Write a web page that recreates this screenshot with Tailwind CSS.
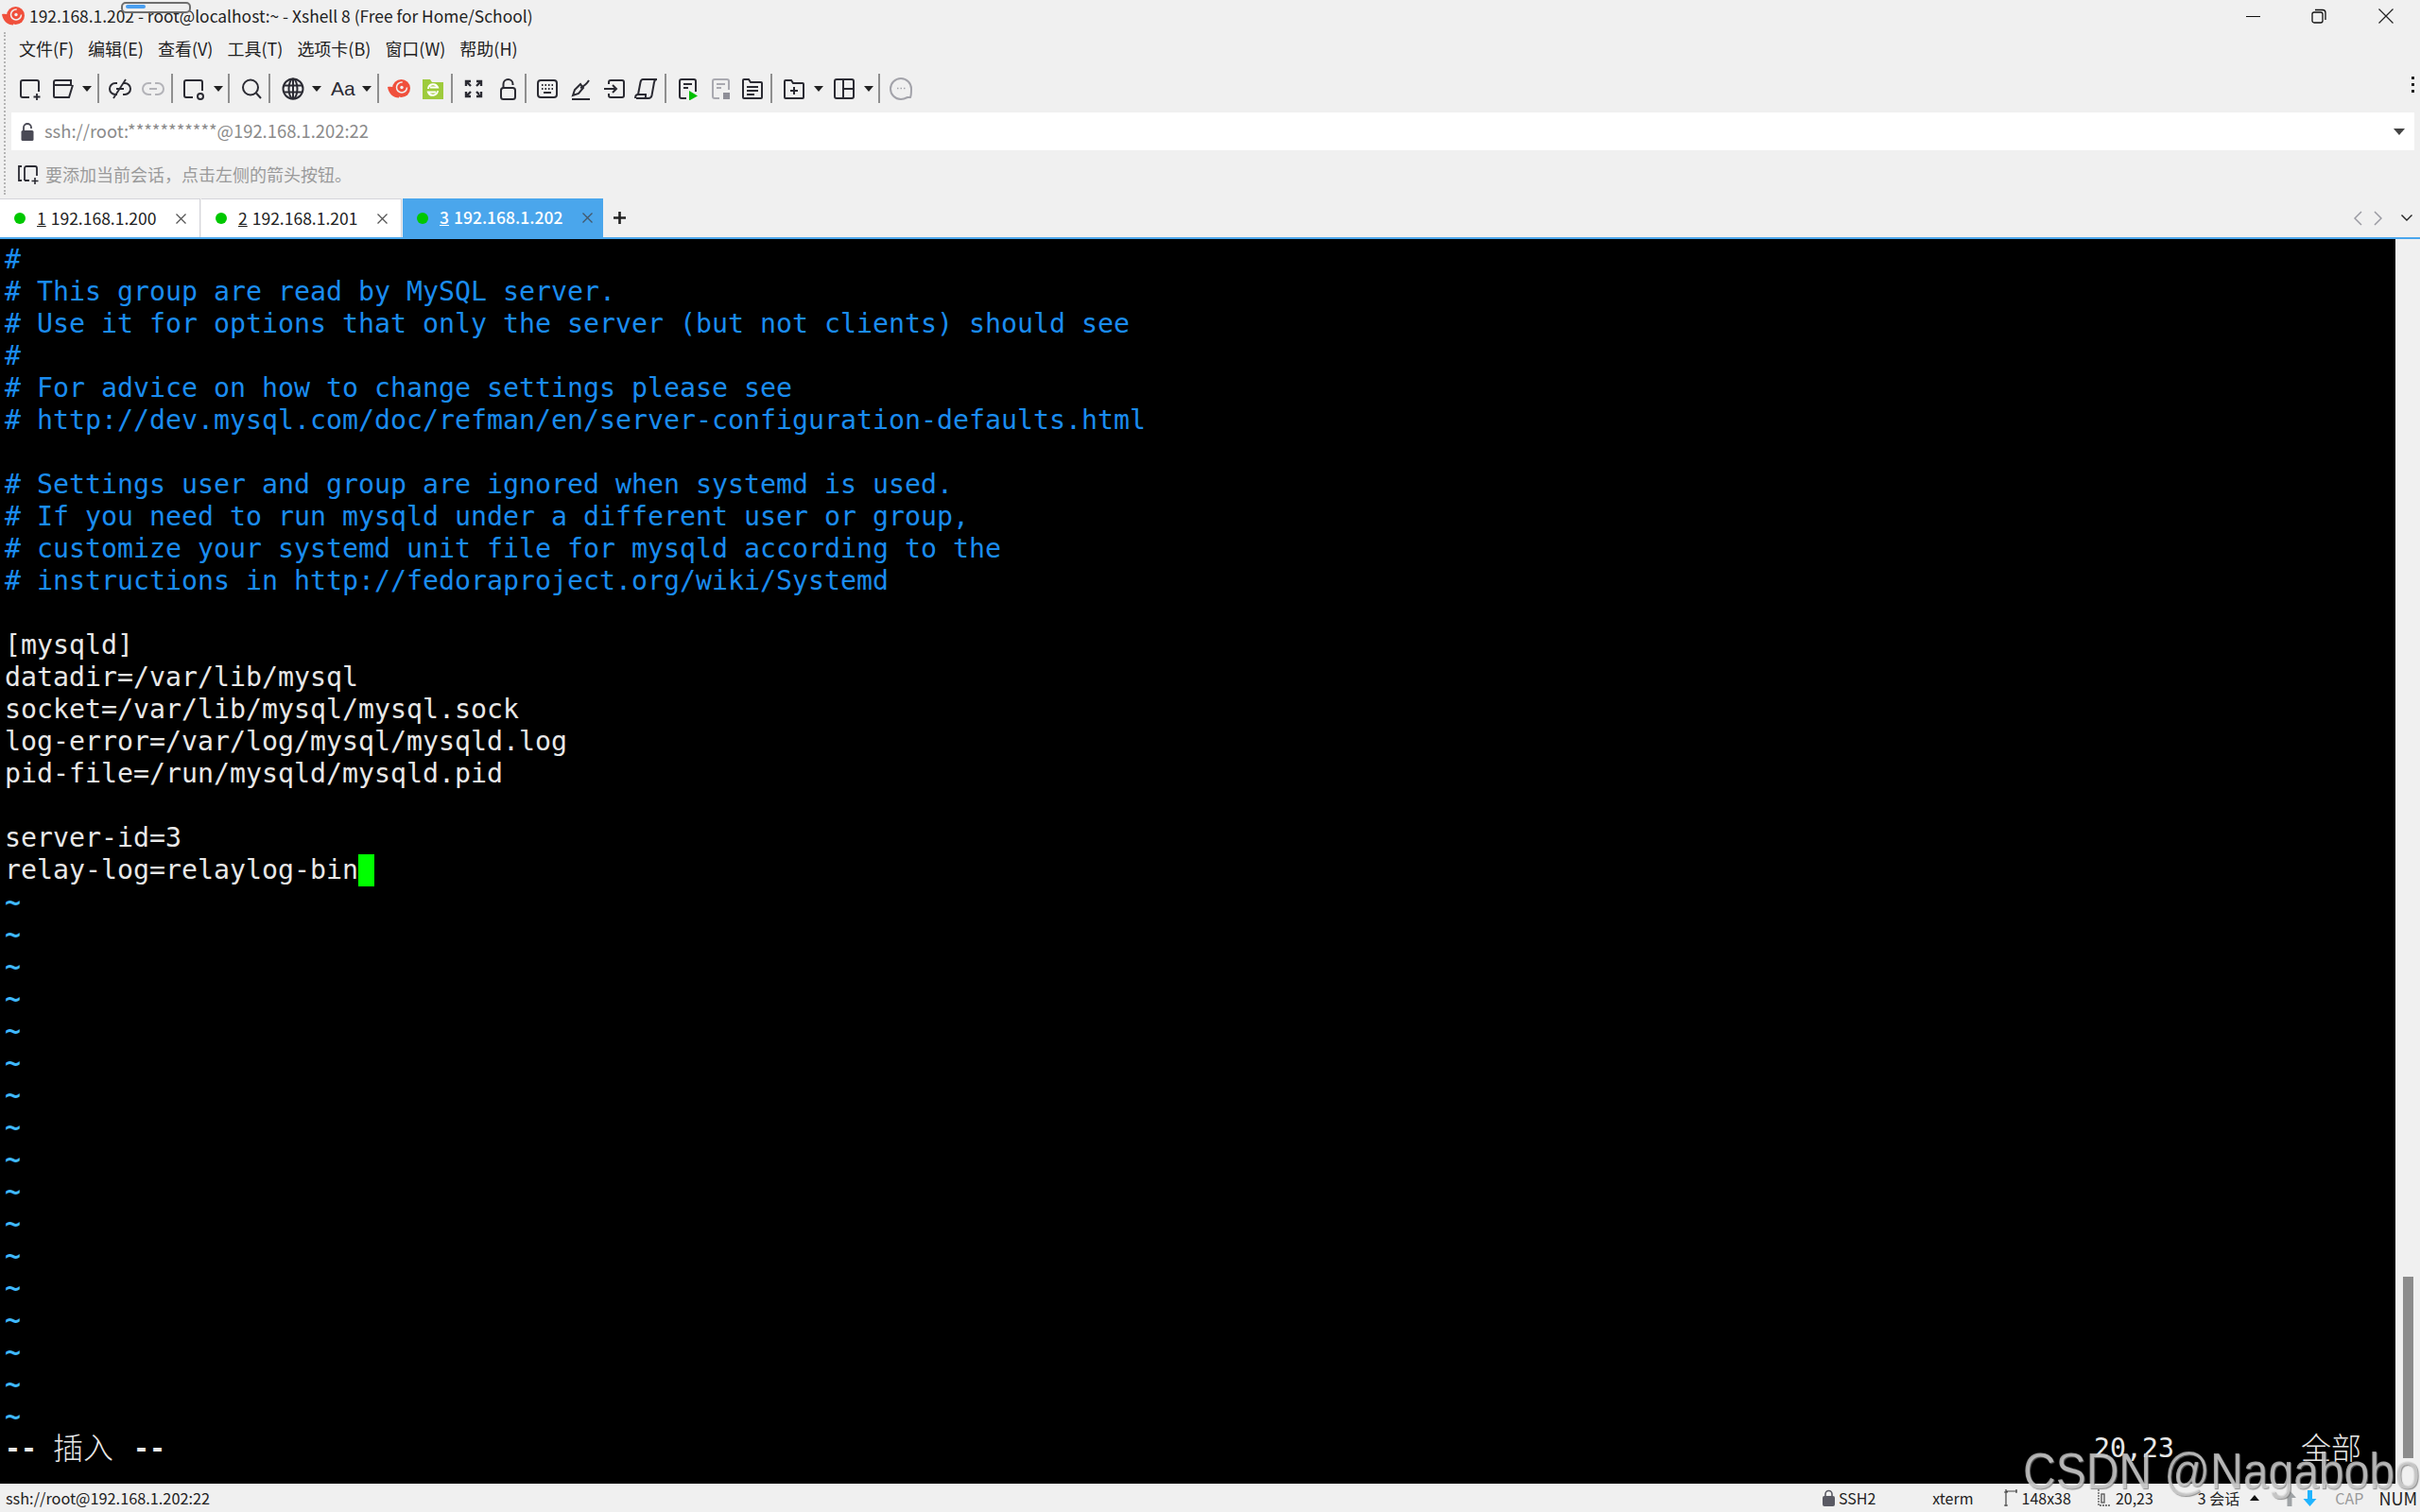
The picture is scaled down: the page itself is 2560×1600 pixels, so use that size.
<!DOCTYPE html>
<html lang="zh-CN">

<head>
    <meta charset="UTF-8">
    <title>192.168.1.202 - root@localhost:~ - Xshell 8 (Free for Home/School)</title>
    <script src="https://cdn.jsdelivr.net/npm/@tailwindcss/browser@4"></script>
</head>

<body class="w-[2560px] h-[1600px] overflow-hidden bg-[#f0f0f0] font-['Noto_Sans_CJK_SC',sans-serif] text-[#222]">
    <div class="relative w-[2560px] h-[1600px] flex flex-col">

        <!-- title bar -->
        <div class="h-[34px] flex items-center shrink-0">
            <svg class="ml-[2px] w-[24px] h-[20px]" viewBox="0 0 24 20">
                <circle cx="14.500" cy="9.500" r="9.500" fill="#f0503c"/>
                <path d="M0 8c5-.500 9 .500 12 2v9.500C6 19.500 1 15 0 8z" fill="#f0503c"/>
                <circle cx="15" cy="8.500" r="5.500" fill="none" stroke="#f0f0f0" stroke-width="1.500" stroke-dasharray="26 9"/>
                <circle cx="15" cy="8.500" r="1.700" fill="#f0f0f0"/>
            </svg>
            <span class="ml-[5px] text-[17.4px] leading-[34px] text-[#222]">192.168.1.202 - root@localhost:~ - Xshell 8 (Free for Home/School)</span>
            <div class="ml-auto flex items-center h-[34px]">
                <div class="w-[15px] h-[1px] bg-[#111] mr-[54px]"></div>
                <svg class="w-[16px] h-[16px] mr-[55px]" viewBox="0 0 16 16" fill="none" stroke="#111" stroke-width="1.300">
                    <rect x="1" y="4" width="11" height="11" rx="2"/>
                    <path d="M4 1.500h8a3 3 0 0 1 3 3V12"/>
                </svg>
                <svg class="w-[16px] h-[16px] mr-[28px]" viewBox="0 0 16 16" fill="none" stroke="#222" stroke-width="1.200">
                    <path d="M.5.500l15 15M15.500.500l-15 15"/>
                </svg>
            </div>
        </div>

        <!-- menu bar -->
        <div class="h-[34px] flex items-center pl-[20px] gap-[15px] text-[18px] text-[#222] shrink-0">
            <span>文件(F)</span>
            <span>编辑(E)</span>
            <span>查看(V)</span>
            <span>工具(T)</span>
            <span>选项卡(B)</span>
            <span>窗口(W)</span>
            <span>帮助(H)</span>
        </div>

        <!-- toolbar -->
        <div class="h-[51px] flex items-center pl-[20px] shrink-0 relative">
            <svg class="w-[24px] h-[24px]" viewBox="0 0 24 24" fill="none" stroke="#2b2b33" stroke-width="2"><path d="M11 21H4a2 2 0 0 1-2-2V5a2 2 0 0 1 2-2h15a2 2 0 0 1 2 2v10"/><path d="M19 17v7M15.500 20.500h7" stroke-width="1.800"/></svg>
            <svg class="ml-[11px] w-[24px] h-[24px]" viewBox="0 0 24 24" fill="none" stroke="#2b2b33" stroke-width="2"><path d="M2 20V5a2 2 0 0 1 2-2h16v5H2"/><path d="M2 20a1 1 0 0 0 1 1h15l4-13"/></svg>
            <div class="ml-[8px] w-0 h-0 border-x-[5px] border-x-transparent border-t-[6px] border-t-[#222]"></div>
            <div class="ml-[6px] w-[2px] h-[31px] bg-[#8f8f8f]"></div>
            <svg class="ml-[10px] w-[24px] h-[24px]" viewBox="0 0 24 24" fill="none" stroke="#2b2b33" stroke-width="2"><path d="M9 6H7a6 6 0 0 0 0 12h2M15 6h2a6 6 0 0 1 0 12h-2M8 12h8"/><path d="M18 2L5 22" stroke-width="1.800"/></svg>
            <svg class="ml-[11px] w-[24px] h-[24px]" viewBox="0 0 24 24" fill="none" stroke="#b3b3b8" stroke-width="2"><path d="M10 6H7a6 6 0 0 0 0 12h3M14 6h3a6 6 0 0 1 0 12h-3M8 12h8"/></svg>
            <div class="ml-[7px] w-[2px] h-[31px] bg-[#8f8f8f]"></div>
            <svg class="ml-[10px] w-[24px] h-[24px]" viewBox="0 0 24 24" fill="none" stroke="#2b2b33" stroke-width="2"><path d="M11 21H4a2 2 0 0 1-2-2V5a2 2 0 0 1 2-2h15a2 2 0 0 1 2 2v9"/><circle cx="19" cy="20" r="3"/></svg>
            <div class="ml-[9px] w-0 h-0 border-x-[5px] border-x-transparent border-t-[6px] border-t-[#222]"></div>
            <div class="ml-[5px] w-[2px] h-[31px] bg-[#8f8f8f]"></div>
            <svg class="ml-[11px] w-[24px] h-[24px]" viewBox="0 0 24 24" fill="none" stroke="#2b2b33" stroke-width="2"><circle cx="11" cy="10.500" r="8"/><path d="M17 16.500l5 5.500"/></svg>
            <div class="ml-[6px] w-[2px] h-[31px] bg-[#8f8f8f]"></div>
            <svg class="ml-[12px] w-[24px] h-[24px]" viewBox="0 0 24 24" fill="none" stroke="#2b2b33" stroke-width="2"><circle cx="12" cy="12" r="10.500"/><ellipse cx="12" cy="12" rx="4.500" ry="10.500"/><path d="M12 1.500v21M2 8.500h20M2 15.500h20"/></svg>
            <div class="ml-[8px] w-0 h-0 border-x-[5px] border-x-transparent border-t-[6px] border-t-[#222]"></div>
            <span class="ml-[10px] w-[24px] text-[21px] leading-[24px] text-center text-[#2b2b33] font-['Liberation_Sans',sans-serif]">Aa</span>
            <div class="ml-[9px] w-0 h-0 border-x-[5px] border-x-transparent border-t-[6px] border-t-[#222]"></div>
            <div class="ml-[6px] w-[2px] h-[31px] bg-[#8f8f8f]"></div>
            <svg class="ml-[9px] w-[24px] h-[20px]" viewBox="0 0 24 20">
                <circle cx="14.500" cy="9.500" r="9.500" fill="#f0503c"/>
                <path d="M0 8c5-.500 9 .500 12 2v9.500C6 19.500 1 15 0 8z" fill="#f0503c"/>
                <circle cx="15" cy="8.500" r="5.500" fill="none" stroke="#f0f0f0" stroke-width="1.500" stroke-dasharray="26 9"/>
                <circle cx="15" cy="8.500" r="1.700" fill="#f0f0f0"/>
            </svg>
            <svg class="ml-[12px] w-[24px] h-[24px]" viewBox="0 0 24 24">
                <path d="M1 2h8l2 3h12v18H1z" fill="#9ecb3c"/>
                <path d="M7 12a5.200 5.200 0 0 1 10-1.500H9M17 14a5.200 5.200 0 0 1-10 1.500h8" fill="none" stroke="#fff" stroke-width="2"/>
            </svg>
            <div class="ml-[7px] w-[2px] h-[31px] bg-[#8f8f8f]"></div>
            <svg class="ml-[10px] w-[24px] h-[24px]" viewBox="0 0 24 24" fill="none" stroke="#2b2b33" stroke-width="2.400"><path d="M4 9V4h5M4 4l5 5M20 9V4h-5M20 4l-5 5M4 15v5h5M4 20l5-5M20 15v5h-5M20 20l-5-5"/></svg>
            <svg class="ml-[12px] w-[24px] h-[24px]" viewBox="0 0 24 24" fill="none" stroke="#2b2b33" stroke-width="2"><rect x="5" y="11" width="15" height="12" rx="2.500"/><path d="M7.500 11V7a5 5 0 0 1 10 0v1"/></svg>
            <div class="ml-[6px] w-[2px] h-[31px] bg-[#8f8f8f]"></div>
            <svg class="ml-[10px] w-[24px] h-[24px]" viewBox="0 0 24 24" fill="none" stroke="#2b2b33" stroke-width="2"><rect x="2" y="3" width="20" height="18" rx="3"/><path d="M6 8h1.500M9.500 8H11M13 8h1.500M16.500 8H18M6 12h1.500M9.500 12H11M13 12h1.500M16.500 12H18M8 16h8"/></svg>
            <svg class="ml-[11px] w-[24px] h-[24px]" viewBox="0 0 24 24" fill="none" stroke="#2b2b33" stroke-width="2"><path d="M3 23h19"/><path d="M4 19l2-6 6-6 3 4-5 6z"/><path d="M12 11c2-1 6-3 9-8"/></svg>
            <svg class="ml-[12px] w-[24px] h-[24px]" viewBox="0 0 24 24" fill="none" stroke="#2b2b33" stroke-width="2"><path d="M6 7V5a2 2 0 0 1 2-2h12a2 2 0 0 1 2 2v14a2 2 0 0 1-2 2H8a2 2 0 0 1-2-2v-2"/><path d="M1 12h13M10 8l4 4-4 4"/></svg>
            <svg class="ml-[9px] w-[24px] h-[24px]" viewBox="0 0 24 24" fill="none" stroke="#2b2b33" stroke-width="2"><path d="M2 22h13c2 0 3-1 3.500-3L21 5c.300-2 1-3 3-3H9C7.500 2 7 3 6.500 5L4 18"/><path d="M1 22c0-2 1-4 3-4h8v2c0 1-.500 2-1.500 2"/></svg>
            <div class="ml-[8px] w-[2px] h-[31px] bg-[#8f8f8f]"></div>
            <svg class="ml-[10px] w-[24px] h-[24px]" viewBox="0 0 24 24" fill="none" stroke="#2b2b33" stroke-width="2"><path d="M11 22H6a2 2 0 0 1-2-2V4a2 2 0 0 1 2-2h13a2 2 0 0 1 2 2v11"/><path d="M8 7h9M8 11h5"/><path d="M14 14l9 5.500-9 5z" fill="#00c000" stroke="none"/></svg>
            <svg class="ml-[11px] w-[24px] h-[24px]" viewBox="0 0 24 24" fill="none" stroke="#a9a9b0" stroke-width="2"><path d="M11 22H6a2 2 0 0 1-2-2V4a2 2 0 0 1 2-2h13a2 2 0 0 1 2 2v9"/><path d="M8 7h9M8 11h5"/><rect x="15" y="16" width="7" height="7" fill="#8f8f98" stroke="none"/></svg>
            <svg class="ml-[10px] w-[24px] h-[24px]" viewBox="0 0 24 24" fill="none" stroke="#2b2b33" stroke-width="2"><path d="M2 4v17a1 1 0 0 0 1 1h18a1 1 0 0 0 1-1V6a1 1 0 0 0-1-1H10L8 2H3a1 1 0 0 0-1 1z"/><path d="M6 10h12M6 14h12M6 18h8"/></svg>
            <div class="ml-[7px] w-[2px] h-[31px] bg-[#8f8f8f]"></div>
            <svg class="ml-[11px] w-[24px] h-[24px]" viewBox="0 0 24 24" fill="none" stroke="#2b2b33" stroke-width="2"><path d="M2 4v17a1 1 0 0 0 1 1h18a1 1 0 0 0 1-1V7a1 1 0 0 0-1-1H11L9 3H3a1 1 0 0 0-1 1z"/><path d="M12 10v8M8 14h8"/></svg>
            <div class="ml-[9px] w-0 h-0 border-x-[5px] border-x-transparent border-t-[6px] border-t-[#222]"></div>
            <svg class="ml-[10px] w-[24px] h-[24px]" viewBox="0 0 24 24" fill="none" stroke="#2b2b33" stroke-width="2"><rect x="2" y="2" width="20" height="20" rx="2"/><path d="M11 2v20M11 12h11"/></svg>
            <div class="ml-[9px] w-0 h-0 border-x-[5px] border-x-transparent border-t-[6px] border-t-[#222]"></div>
            <div class="ml-[5px] w-[2px] h-[31px] bg-[#8f8f8f]"></div>
            <svg class="ml-[10px] w-[24px] h-[26px]" viewBox="0 0 24 26" fill="none" stroke="#a3a3aa" stroke-width="2"><path d="M22 22c1-2 1-6 1-9a11 11 0 1 0-11 11c3 0 5-1 7-2z"/><path d="M8 12.500h1.500M11.500 12.500H13M15 12.500h1.500" stroke-width="1.500"/></svg>
            <div class="absolute right-[6px] top-[13px] flex flex-col gap-[4px]">
                <div class="w-[3px] h-[3px] bg-[#222]"></div>
                <div class="w-[3px] h-[3px] bg-[#222]"></div>
                <div class="w-[3px] h-[3px] bg-[#222]"></div>
            </div>
        </div>

        <!-- address bar -->
        <div class="h-[40px] ml-[12px] mr-[6px] bg-white flex items-center shrink-0">
            <svg class="ml-[10px] w-[14px] h-[19px]" viewBox="0 0 14 19"><path d="M3 8V5a4 4 0 0 1 8 0v1" fill="none" stroke="#4a4a55" stroke-width="1.800"/><rect x="0.500" y="8" width="13" height="11" rx="1.500" fill="#4a4a55"/></svg>
            <span class="ml-[11px] text-[18.4px] text-[#8b8b8b]">ssh://root:***********@192.168.1.202:22</span>
            <div class="ml-auto mr-[10px] w-0 h-0 border-x-[6px] border-x-transparent border-t-[7px] border-t-[#444]"></div>
        </div>

        <!-- hint bar -->
        <div class="h-[51px] flex items-center pl-[19px] shrink-0">
            <svg class="w-[22px] h-[20px]" viewBox="0 0 22 20" fill="none" stroke="#2b2b33" stroke-width="1.800"><path d="M4 1H1v15h3"/><path d="M7 16V3a2 2 0 0 1 2-2h9a2 2 0 0 1 2 2v8M7 16h5"/><path d="M18 13v7M14.500 16.500h7" stroke-width="1.600"/></svg>
            <span class="ml-[7px] text-[18px] text-[#9a9a9a]">要添加当前会话，点击左侧的箭头按钮。</span>
        </div>

        <!-- tabs -->
        <div class="h-[43px] flex items-stretch border-b-[2px] border-b-[#4aa6ec] shrink-0 text-[17.5px]">
            <div class="w-[212px] bg-white border-t-[1px] border-r-[1px] border-[#d4d4da] flex items-center pl-[15px]">
                <div class="w-[12px] h-[12px] rounded-full bg-[#00c800]"></div>
                <span class="ml-[12px] underline">1</span>
                <span class="ml-[5px]">192.168.1.200</span>
                <svg class="ml-[21px] w-[11px] h-[11px]" viewBox="0 0 11 11" fill="none" stroke="#555" stroke-width="1.300"><path d="M.5.500l10 10M10.500.500l-10 10"/></svg>
            </div>
            <div class="ml-[1px] w-[212px] bg-white border-t-[1px] border-r-[1px] border-[#d4d4da] flex items-center pl-[15px]">
                <div class="w-[12px] h-[12px] rounded-full bg-[#00c800]"></div>
                <span class="ml-[12px] underline">2</span>
                <span class="ml-[5px]">192.168.1.201</span>
                <svg class="ml-[21px] w-[11px] h-[11px]" viewBox="0 0 11 11" fill="none" stroke="#555" stroke-width="1.300"><path d="M.5.500l10 10M10.500.500l-10 10"/></svg>
            </div>
            <div class="ml-[1px] w-[212px] bg-[#4aa6ec] flex items-center pl-[15px] text-white font-medium">
                <div class="w-[12px] h-[12px] rounded-full bg-[#00c800]"></div>
                <span class="ml-[12px] underline">3</span>
                <span class="ml-[5px]">192.168.1.202</span>
                <svg class="ml-[21px] w-[11px] h-[11px]" viewBox="0 0 11 11" fill="none" stroke="#44586a" stroke-width="1.300"><path d="M.5.500l10 10M10.500.500l-10 10"/></svg>
            </div>
            <svg class="ml-[11px] self-center w-[13px] h-[13px]" viewBox="0 0 13 13" fill="none" stroke="#222" stroke-width="2.600"><path d="M6.500 0v13M0 6.500h13"/></svg>
            <div class="ml-auto flex items-center">
                <svg class="w-[9px] h-[16px] mr-[12px]" viewBox="0 0 9 16" fill="none" stroke="#9a9aa2" stroke-width="1.500"><path d="M8 1L1 8l7 7"/></svg>
                <svg class="w-[9px] h-[16px] mr-[20px]" viewBox="0 0 9 16" fill="none" stroke="#9a9aa2" stroke-width="1.500"><path d="M1 1l7 7-7 7"/></svg>
                <svg class="w-[12px] h-[7px] mr-[8px]" viewBox="0 0 12 7" fill="none" stroke="#222" stroke-width="1.400"><path d="M.5.500L6 6l5.500-5.500"/></svg>
            </div>
        </div>

        <!-- terminal + scrollbar -->
        <div class="h-[1317px] flex shrink-0">
            <div class="w-[2534px] bg-black pt-[5px] pl-[5px] font-['DejaVu_Sans_Mono',monospace] text-[28.24px] leading-[34px] text-[#e8e8e8] overflow-hidden">
                <div class="text-[#1a8cf0]">
                    <div class="h-[34px] whitespace-pre">#</div>
                    <div class="h-[34px] whitespace-pre"># This group are read by MySQL server.</div>
                    <div class="h-[34px] whitespace-pre"># Use it for options that only the server (but not clients) should see</div>
                    <div class="h-[34px] whitespace-pre">#</div>
                    <div class="h-[34px] whitespace-pre"># For advice on how to change settings please see</div>
                    <div class="h-[34px] whitespace-pre"># http://dev.mysql.com/doc/refman/en/server-configuration-defaults.html</div>
                    <div class="h-[34px]"></div>
                    <div class="h-[34px] whitespace-pre"># Settings user and group are ignored when systemd is used.</div>
                    <div class="h-[34px] whitespace-pre"># If you need to run mysqld under a different user or group,</div>
                    <div class="h-[34px] whitespace-pre"># customize your systemd unit file for mysqld according to the</div>
                    <div class="h-[34px] whitespace-pre"># instructions in http://fedoraproject.org/wiki/Systemd</div>
                    <div class="h-[34px]"></div>
                </div>
                <div class="h-[34px] whitespace-pre">[mysqld]</div>
                <div class="h-[34px] whitespace-pre">datadir=/var/lib/mysql</div>
                <div class="h-[34px] whitespace-pre">socket=/var/lib/mysql/mysql.sock</div>
                <div class="h-[34px] whitespace-pre">log-error=/var/log/mysql/mysqld.log</div>
                <div class="h-[34px] whitespace-pre">pid-file=/run/mysqld/mysqld.pid</div>
                <div class="h-[34px]"></div>
                <div class="h-[34px] whitespace-pre">server-id=3</div>
                <div class="h-[34px] whitespace-pre flex">relay-log=relaylog-bin<div class="w-[17px] h-[34px] bg-[#00ff00]"></div></div>
                <div class="text-[#3fb8ff] font-bold">
                    <div class="h-[34px]">~</div><div class="h-[34px]">~</div><div class="h-[34px]">~</div><div class="h-[34px]">~</div>
                    <div class="h-[34px]">~</div><div class="h-[34px]">~</div><div class="h-[34px]">~</div><div class="h-[34px]">~</div>
                    <div class="h-[34px]">~</div><div class="h-[34px]">~</div><div class="h-[34px]">~</div><div class="h-[34px]">~</div>
                    <div class="h-[34px]">~</div><div class="h-[34px]">~</div><div class="h-[34px]">~</div><div class="h-[34px]">~</div>
                    <div class="h-[34px]">~</div>
                </div>
                <div class="h-[34px] flex items-center whitespace-pre">
                    <span class="font-bold">-- </span><span class="w-[68px] -translate-y-[3px] font-['Noto_Sans_CJK_SC',sans-serif] font-light text-[32px] leading-[34px]">插入</span><span class="font-bold"> --</span>
                    <span class="ml-[2040px]">20,23</span>
                    <span class="ml-[134px] w-[68px] -translate-y-[3px] font-['Noto_Sans_CJK_SC',sans-serif] font-light text-[32px] leading-[34px]">全部</span>
                </div>
            </div>
            <div class="relative flex-1">
                <div class="absolute left-[8px] top-[1098px] w-[11px] h-[192px] bg-[#8c8c8c]"></div>
            </div>
        </div>

        <!-- status bar -->
        <div class="h-[30px] flex items-center text-[16px] text-[#222] shrink-0">
            <span class="ml-[6px] text-[16.3px]">ssh://root@192.168.1.202:22</span>
            <div class="ml-auto flex items-center">
                <svg class="w-[13px] h-[18px]" viewBox="0 0 13 18"><path d="M3 8V5a3.500 3.500 0 0 1 7 0v3" fill="none" stroke="#5a5a64" stroke-width="1.600"/><rect x="0" y="7" width="13" height="11" rx="2" fill="#5a5a64"/></svg>
                <span class="ml-[4px]">SSH2</span>
                <span class="ml-[60px]">xterm</span>
                <svg class="ml-[31px] w-[16px] h-[20px]" viewBox="0 0 16 20" fill="none" stroke="#444" stroke-width="1.200"><path d="M3 19V3h12M1 4h4M1 18h4M3 1v3M14 1v4"/></svg>
                <span class="ml-[4px]">148x38</span>
                <svg class="ml-[28px] w-[13px] h-[20px]" viewBox="0 0 13 20" fill="none" stroke="#555" stroke-width="1.300"><path d="M1 1v17h12" stroke-dasharray="2 1"/><rect x="4" y="6" width="3" height="9"/></svg>
                <span class="ml-[6px]">20,23</span>
                <span class="ml-[47px]">3 会话</span>
                <div class="ml-[11px] w-0 h-0 border-x-[5px] border-x-transparent border-b-[6px] border-b-[#111]"></div>
                <svg class="ml-[25px] w-[14px] h-[17px]" viewBox="0 0 14 17" fill="#9fa3a6"><path d="M7 0l7 8H9.500v9h-5V8H0z"/></svg>
                <svg class="ml-[7px] w-[15px] h-[17px]" viewBox="0 0 14 17" fill="#1fb4ff"><path d="M7 17l7-8H9.500V0h-5v9H0z"/></svg>
                <span class="ml-[19px] text-[#9a9a9a]">CAP</span>
                <span class="ml-[16px] mr-[3px] text-[18px]">NUM</span>
            </div>
        </div>

        <!-- floating pill over the title bar -->
        <div class="absolute left-[128px] top-[2px] w-[74px] h-[12px] border-[2px] border-[#6e6e6e] rounded-[5px] bg-[#efefef]">
            <div class="ml-[3px] mt-[1px] w-[21px] h-[4px] rounded-full bg-[#4a9ff0]"></div>
        </div>
        <!-- grip on the toolbars -->
        <div class="absolute left-[4px] top-[34px] h-[172px] border-l-[2px] border-dotted border-l-[#b5b5b5]"></div>
        <!-- watermark -->
        <span class="absolute left-[2140px] top-[1521px] text-[48px] leading-[72px] scale-y-[1.1] whitespace-nowrap font-['Liberation_Sans',sans-serif] text-[#dcdcdc]/70 [text-shadow:1px_1px_1px_rgba(120,120,120,0.8)]">CSDN @Nagabobo</span>
    </div>
</body>

</html>
